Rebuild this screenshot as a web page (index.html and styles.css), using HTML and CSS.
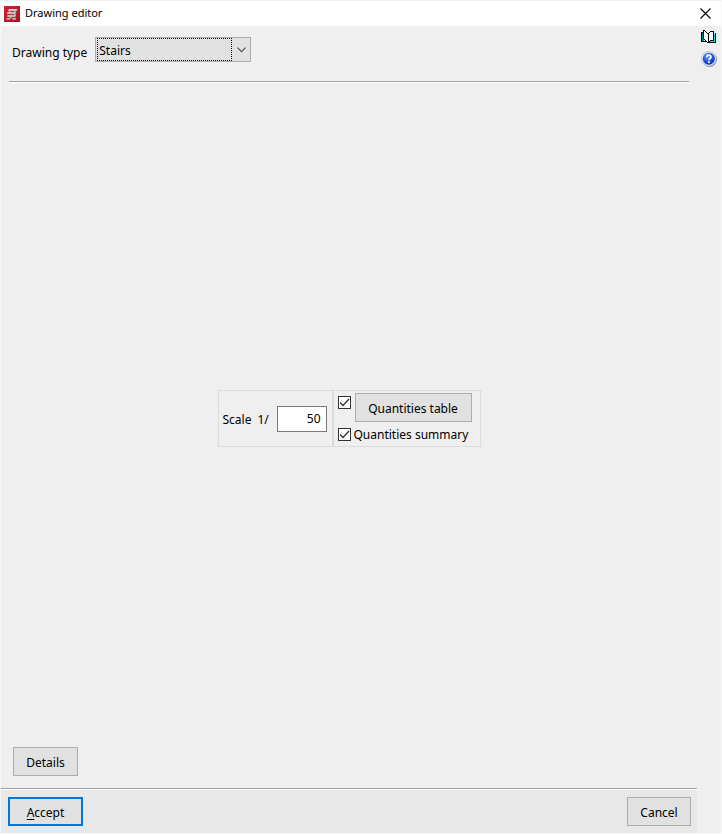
FILE: index.html
```html
<!DOCTYPE html>
<html lang="en">
<head>
<meta charset="utf-8">
<title>Drawing editor</title>
<link rel="stylesheet" href="styles.css">
</head>
<body>
<div class="window">
  <header class="titlebar">
    <svg class="app-icon" width="16" height="16" viewBox="0 0 16 16" aria-hidden="true">
      <defs><linearGradient id="red" x1="0" y1="0" x2="1" y2="1"><stop offset="0" stop-color="#cc2432"/><stop offset="1" stop-color="#a81424"/></linearGradient></defs>
      <rect width="16" height="16" fill="url(#red)"/>
      <path d="M5 4h8l-1 4-.5 4.500H4.500L5 8z" fill="#7c5055"/>
      <path d="M5 3h8.500l-1 1.700H4zM3.500 6.200h8.500l-.8 1.500H3zM3.500 9.200h8.500l-.8 1.500H3zM2.500 12.200h3.500v1.300H2.500zM8.500 12.200h3.500v1.300H8z" fill="#e2dcda"/>
      <path d="M6 4.700L5 6.500M11.300 4.700L10.500 6.500M11.300 7.500L10.500 9.500M7 10.500L6 12.500" stroke="#cfc4c3" stroke-width="1.200" fill="none"/>
    </svg>
    <h1 class="title">Drawing editor</h1>
    <button class="icon-button close" type="button" aria-label="Close">
      <svg width="11" height="11" viewBox="0 0 11 11"><path d="M.5.5l10 10M10.500.5l-10 10" stroke="#000" stroke-width="1.100" fill="none"/></svg>
    </button>
  </header>
  <div class="body">
    <form class="main">
      <div class="type-row">
        <label for="type">Drawing type</label>
        <div class="select-box">
          <select id="type"><option>Stairs</option></select>
          <svg class="chevron" width="9" height="6" viewBox="0 0 9 6" aria-hidden="true"><path d="M.5.700l4 4 4-4" fill="none" stroke="#505050" stroke-width="1.200"/></svg>
        </div>
      </div>
      <div class="content">
        <div class="options">
          <div class="panel scale">
            <label for="scale">Scale</label>
            <span>1/</span>
            <input class="number" id="scale" type="text" value="50">
          </div>
          <div class="panel quantities">
            <div class="table-row">
              <input class="check" type="checkbox" checked aria-label="Quantities table">
              <button class="button table-button" type="button">Quantities table</button>
            </div>
            <div class="summary-row">
              <input class="check" id="summary" type="checkbox" checked>
              <label for="summary">Quantities summary</label>
            </div>
          </div>
        </div>
      </div>
      <div class="details-row"><button class="button details" type="button">Details</button></div>
      <footer class="footer">
        <button class="button accept" type="submit"><span class="key">A</span>ccept</button>
        <button class="button cancel" type="button">Cancel</button>
      </footer>
    </form>
    <nav class="side">
      <button class="icon-button" type="button" aria-label="Manual">
        <svg width="16" height="16" viewBox="0 0 16 16" shape-rendering="crispEdges">
          <path d="M0 3h3v9H0z" fill="#008c8c"/>
          <path d="M13 5h2v9H9v-2h4z" fill="#24dede"/>
          <path d="M3 1h1v1h1v1h1v1h1v9H6v-1H5v-1H3zM8 4h1V3h4v8H9v1H8z" fill="#fff"/>
          <path d="M2 1h1v9H2zM3 1h1v1H3zM4 2h1v1H4zM5 3h1v1H5zM6 4h1v1H6zM7 4h1v10H7zM8 3h1v1H8zM9 2h4v1H9zM12 2h1v9h-1zM9 11h4v1H9zM8 12h1v1H8zM3 10h1v1H3zM4 11h1v1H4zM5 12h1v1H5zM6 13h1v1H6zM0 3h1v9H0zM1 3h1v1H1zM0 12h5v1H0zM14 4h1v10h-1zM8 13h7v1H8z" fill="#000"/>
        </svg>
      </button>
      <button class="icon-button" type="button" aria-label="Help">
        <svg width="16" height="16" viewBox="0 0 16 16">
          <defs><radialGradient id="blue" cx=".4" cy=".3" r=".7"><stop offset="0" stop-color="#6b9cff"/><stop offset=".6" stop-color="#2355e0"/><stop offset="1" stop-color="#1232a8"/></radialGradient></defs>
          <circle cx="8.500" cy="8.500" r="7.400" fill="#7f8796"/>
          <circle cx="7.700" cy="7.700" r="7.400" fill="#d5e0f4" stroke="#aab8d6" stroke-width=".5"/>
          <circle cx="7.800" cy="7.800" r="6" fill="url(#blue)"/>
          <path d="M5.700 6.200C5.700 3.400 10 3.400 10 6c0 1.500-2.100 1.500-2.100 3.300" fill="none" stroke="#fff" stroke-width="1.700"/>
          <rect x="7" y="10.300" width="1.800" height="1.700" fill="#fff"/>
        </svg>
      </button>
    </nav>
  </div>
</div>
</body>
</html>
```
FILE: styles.css
```css
* {
  box-sizing: border-box;
}

body {
  margin: 0;
  color: #000;
  background: #efefef;
  font: 12px/20px "Noto Sans", "Open Sans", sans-serif;
}

button, input, select {
  margin: 0;
  color: inherit;
  font: inherit;
}

svg {
  display: block;
}

.window {
  display: flex;
  flex-direction: column;
  min-height: 100vh;
  border: 1px solid #f8f8f8;
  border-top-color: #f0f0f0;
}

.titlebar {
  display: flex;
  align-items: center;
  gap: 5px;
  height: 25px;
  padding: 0 10px 0 3px;
  background: #fff;
}

.title {
  flex: 1;
  margin: 0;
  padding-bottom: 2px;
  font-size: 11px;
  font-weight: 400;
}

.icon-button {
  padding: 0;
  border: 0;
  background: none;
}

.body {
  display: flex;
  flex: 1;
}

.main {
  display: flex;
  flex: 1;
  flex-direction: column;
}

.type-row {
  display: flex;
  align-items: flex-end;
  gap: 8px;
  margin: 0 8px;
  padding: 11px 3px 19px;
  border-bottom: 1px solid #a0a0a0;
  box-shadow: 0 1px #fff;
}

.type-row label {
  line-height: 18px;
}

.select-box {
  display: grid;
  align-items: center;
  width: 156px;
}

.select-box select {
  grid-area: 1 / 1;
  appearance: none;
  height: 25px;
  padding: 2px 3px 0;
  border: 1px solid #adadad;
  border-radius: 0;
  background: #e1e1e1;
}

.select-box::before {
  content: "";
  grid-area: 1 / 1;
  z-index: 1;
  height: 21px;
  margin: 0 19px 0 2px;
  border: 1px dotted #000;
  pointer-events: none;
}

.chevron {
  grid-area: 1 / 1;
  z-index: 1;
  justify-self: end;
  margin-right: 5px;
  pointer-events: none;
}

.content {
  display: flex;
  flex: 1;
  align-items: center;
  justify-content: center;
  padding-top: 8px;
}

.options {
  display: flex;
}

.panel {
  border: 1px solid #dcdcdc;
}

.scale {
  display: flex;
  align-items: center;
  gap: 6px;
  width: 115px;
  padding: 0 5px 0 4px;
}

.scale label,
.scale span {
  padding-top: 2px;
}

.number {
  width: 50px;
  height: 26px;
  margin-left: auto;
  padding: 0 5px;
  border: 1px solid #7a7a7a;
  background: #fff;
  text-align: right;
}

.quantities {
  padding: 2px 8px 0 4px;
  border-left-color: #d8d8d8;
}

.table-row {
  display: flex;
  gap: 4px;
}

.table-row .check {
  margin-top: 3px;
}

.summary-row {
  display: flex;
  align-items: center;
  gap: 3px;
  height: 24px;
}

.summary-row label {
  padding-top: 2px;
}

.check {
  appearance: none;
  flex: none;
  width: 13px;
  height: 13px;
  border: 1px solid #333;
  background: #fff;
}

.check:checked {
  background: #fff url("data:image/svg+xml,%3Csvg xmlns='http://www.w3.org/2000/svg' viewBox='0 0 11 11'%3E%3Cpath d='M1 5.500l3 3 6-6.500' fill='none' stroke='%23333' stroke-width='1.300'/%3E%3C/svg%3E") center / 11px 11px no-repeat;
}

.button {
  height: 29px;
  padding: 2px 0 0;
  border: 1px solid #adadad;
  background: #e1e1e1;
}

.table-button {
  width: 117px;
}

.details-row {
  padding: 0 12px 12px;
}

.details {
  width: 65px;
}

.footer {
  display: flex;
  justify-content: space-between;
  padding: 8px 6px 7px 7px;
  border-top: 1px solid #a0a0a0;
  background: #e8e8e8;
  box-shadow: inset 0 1px #fff;
}

.accept {
  width: 75px;
  border: 2px solid #0078d7;
}

.key {
  text-decoration: underline;
  text-underline-offset: 2px;
}

.cancel {
  width: 64px;
}

.side {
  display: flex;
  flex-direction: column;
  gap: 6px;
  width: 24px;
  padding: 3px 4px;
}
```
